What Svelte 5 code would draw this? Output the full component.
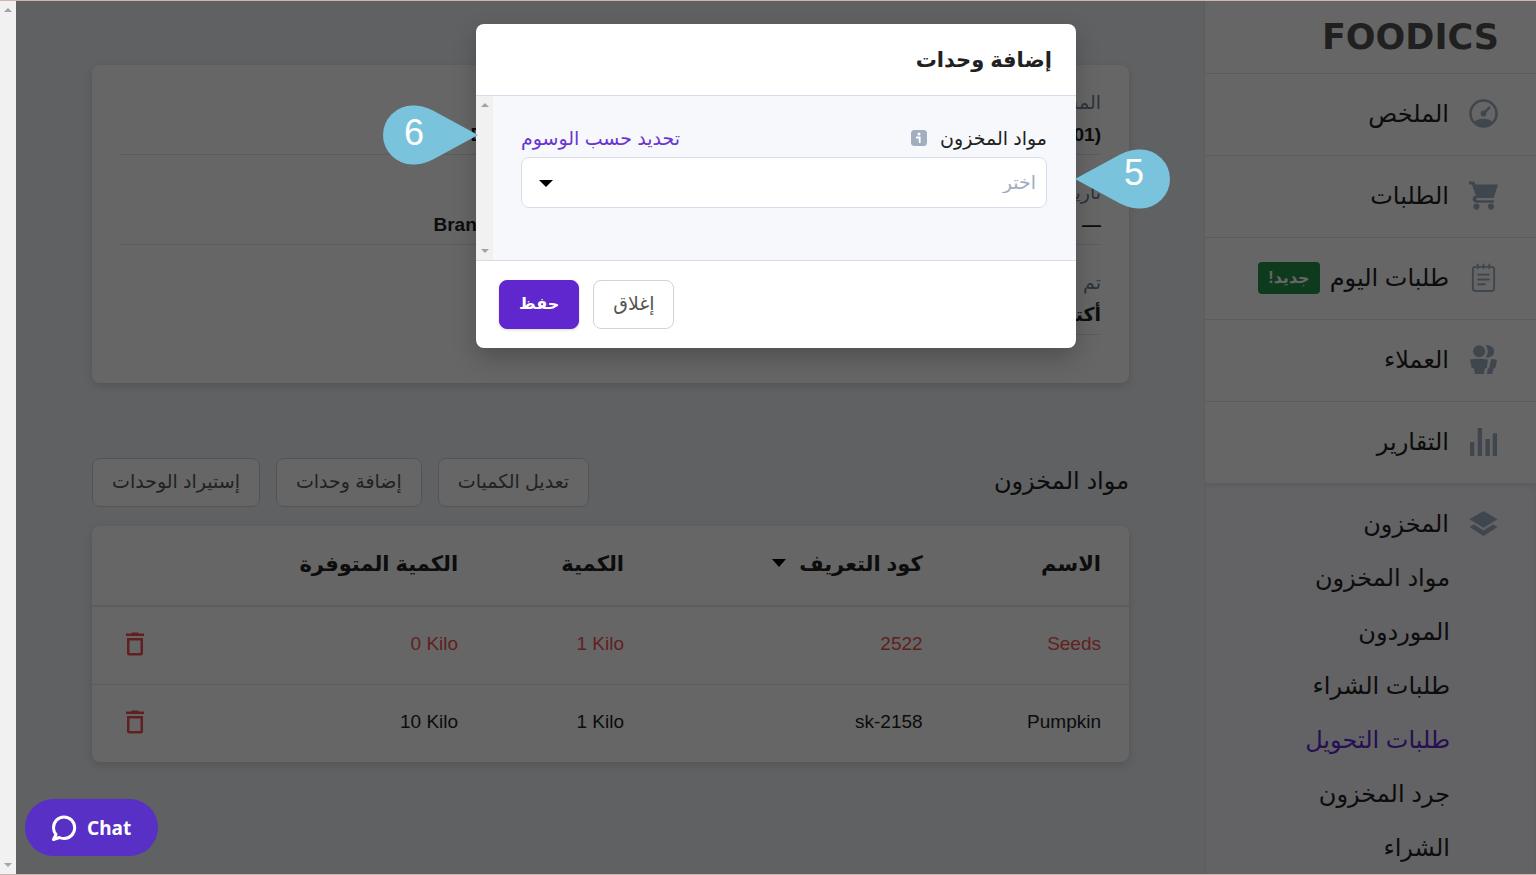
<script lang="ts">
  type Row = { name: string; sku: string; qty: string; available: string; short?: boolean };

  const nav = [
    { label: "الملخص", icon: "gauge" },
    { label: "الطلبات", icon: "cart" },
    { label: "طلبات اليوم", icon: "note", badge: "جديد!" },
    { label: "العملاء", icon: "people" },
    { label: "التقارير", icon: "bars" },
  ];

  const inventory = [
    "مواد المخزون",
    "الموردون",
    "طلبات الشراء",
    "طلبات التحويل",
    "جرد المخزون",
    "الشراء",
  ];
  const current = "طلبات التحويل";

  const details = [
    { label: "المستودع", value: "(B01)" },
    { label: "", value: "Draft" },
    { label: "تاريخ", value: "—" },
    { label: "", value: "Branch 1" },
    { label: "تم", value: "أكتوبر" },
  ];

  const actions = ["تعديل الكميات", "إضافة وحدات", "إستيراد الوحدات"];

  const rows: Row[] = [
    { name: "Seeds", sku: "2522", qty: "1 Kilo", available: "0 Kilo", short: true },
    { name: "Pumpkin", sku: "sk-2158", qty: "1 Kilo", available: "10 Kilo" },
  ];

  let item = $state("");
</script>

{#snippet icon(name: string)}
  <svg class="icon" viewBox="0 0 30 30" aria-hidden="true">
    {#if name === "gauge"}
      <circle cx="15" cy="15" r="13.500" fill="none" stroke="currentColor" stroke-width="2.600" />
      <path d="M5.500 24c2.500-2.800 5.500-3.500 9.500-3.500s7 .7 9.500 3.500c-2.200 3-5.500 4.700-9.500 4.700S7.700 27 5.500 24z" fill="currentColor" />
      <circle cx="15" cy="15" r="3" fill="currentColor" />
      <path d="M15.500 14.500l5.500-5.500" stroke="currentColor" stroke-width="2.600" stroke-linecap="round" />
    {:else if name === "cart"}
      <path
        d="M0 .5h5.300l1.400 3H30l-4.500 14H9.500c-1.300 0-2 .3-2 1.200s.8 1.300 2 1.300h16.200v2.500H8.500C5.600 22.500 3.700 21 3.700 18.700c0-1.700 1-2.800 2.600-3.500L7 15 3 3.500H0z"
        fill="currentColor"
      />
      <circle cx="7.700" cy="26.500" r="3.200" fill="currentColor" />
      <circle cx="22.700" cy="26.500" r="3.200" fill="currentColor" />
    {:else if name === "note"}
      <g fill="none" stroke="currentColor" stroke-width="2" stroke-linecap="round">
        <rect x="4" y="4" width="22" height="25" rx="2.500" />
        <path d="M9 1.500v4M15 1.500v4M21 1.500v4M9.500 12h11M9.500 17h11M9.500 22h7" />
      </g>
    {:else if name === "people"}
      <g fill="currentColor">
        <circle cx="10.500" cy="6.500" r="6.200" />
        <path d="M17 .5c5-.8 9 2 9 6.200s-4 7-9 6c3.200-3.600 3.200-8.600 0-12.200z" />
        <path d="M1 15c5.500-1.200 13-1.200 18.500 0l-1 8.500-2.300 1-.7 5.500H6.200L5.200 24.500l-2.500-1z" />
        <path d="M23 14.500c2 0 4 .2 6 .8l-1.500 8-2 1-1.500 5.700h-5.500l1-5.500 1.500-1z" />
      </g>
    {:else if name === "bars"}
      <path d="M1 15.500h4.500V30H1zM9 1h4.500v29H9zM17 12.500h4.500V30H17zM24.500 6.500H29V30h-4.500z" fill="currentColor" />
    {:else}
      <path d="M15 2L.5 10.700 15 19.500l14.500-8.800zM.5 18.500L15 28l14.500-9.500-4.800-2.500L15 22.200 5.300 16z" fill="currentColor" />
    {/if}
  </svg>
{/snippet}

<div class="shell" dir="rtl" lang="ar">
  <div class="page">
    <aside class="sidebar">
      <a class="logo" href="#home" dir="ltr">FOODICS</a>
      <nav>
        {#each nav as n}
          <a class="nav-item" href="#{n.icon}">
            {@render icon(n.icon)}
            <span>{n.label}</span>
            {#if n.badge}<span class="badge">{n.badge}</span>{/if}
          </a>
        {/each}
        <div class="group">
          <a class="nav-item head" href="#inventory">
            {@render icon("layers")}
            <span>المخزون</span>
          </a>
          {#each inventory as label}
            <a class="sub" class:active={label === current} href="#inventory">{label}</a>
          {/each}
        </div>
      </nav>
    </aside>

    <main>
      <dl class="card details">
        {#each details as d}
          <div class="detail">
            <dt>{d.label}</dt>
            <dd><bdi>{d.value}</bdi></dd>
          </div>
        {/each}
      </dl>

      <div class="section-head">
        <h2>مواد المخزون</h2>
        <div class="actions">
          {#each actions as a}
            <button type="button" class="btn">{a}</button>
          {/each}
        </div>
      </div>

      <div class="card">
        <table>
          <colgroup>
            <col class="c-name" /><col class="c-sku" /><col class="c-qty" /><col class="c-av" /><col />
          </colgroup>
          <thead>
            <tr>
              <th>الاسم</th>
              <th>
                كود التعريف
                <svg class="sort" viewBox="0 0 14 8" aria-hidden="true"><path d="M0 0h14L7 8z" /></svg>
              </th>
              <th>الكمية</th>
              <th>الكمية المتوفرة</th>
              <td></td>
            </tr>
          </thead>
          <tbody>
            {#each rows as r}
              <tr class:short={r.short}>
                <td><bdi>{r.name}</bdi></td>
                <td><bdi>{r.sku}</bdi></td>
                <td><bdi dir="ltr">{r.qty}</bdi></td>
                <td><bdi dir="ltr">{r.available}</bdi></td>
                <td class="del">
                  <button type="button" class="trash" aria-label="حذف">
                    <svg viewBox="0 0 18 24" aria-hidden="true">
                      <path d="M0 1.500h5L6 .5h6l1 1h5V4H0zM1 6h16v15.500a2 2 0 0 1-2 2H3a2 2 0 0 1-2-2zM3.500 8.500V21h11V8.500z" fill-rule="evenodd" />
                    </svg>
                  </button>
                </td>
              </tr>
            {/each}
          </tbody>
        </table>
      </div>
    </main>
  </div>

  <div class="scrollbar">
    <svg viewBox="0 0 8 4" aria-hidden="true"><path d="M4 0l4 4H0z" /></svg>
    <svg viewBox="0 0 8 4" aria-hidden="true"><path d="M0 0h8L4 4z" /></svg>
  </div>

  <div class="overlay">
    <div class="modal-wrap">
      <div class="modal" role="dialog" aria-modal="true" aria-labelledby="dlg-title">
        <header>
          <h3 id="dlg-title">إضافة وحدات</h3>
        </header>
        <div class="body">
          <div class="fields">
            <div class="label-row">
              <label for="items">مواد المخزون</label>
              <svg class="info" viewBox="0 0 16 16" aria-hidden="true">
                <rect width="16" height="16" rx="3.500" fill="#a0aec0" />
                <circle cx="8" cy="4" r="1.500" fill="#fff" />
                <path d="M5 7.500h3.700V13" fill="none" stroke="#fff" stroke-width="1.800" />
              </svg>
              <a class="by-tag" href="#tags">تحديد حسب الوسوم</a>
            </div>
            <div class="select">
              <select id="items" bind:value={item}>
                <option value="">اختر</option>
              </select>
              <svg viewBox="0 0 14 7" aria-hidden="true"><path d="M0 0h14L7 7z" /></svg>
            </div>
          </div>
          <div class="scrollbar inner">
            <svg viewBox="0 0 8 4" aria-hidden="true"><path d="M4 0l4 4H0z" /></svg>
            <svg viewBox="0 0 8 4" aria-hidden="true"><path d="M0 0h8L4 4z" /></svg>
          </div>
        </div>
        <footer>
          <button type="button" class="btn">إغلاق</button>
          <button type="button" class="btn primary">حفظ</button>
        </footer>
      </div>

      <div class="pin five">
        <svg viewBox="0 0 95 60" aria-hidden="true">
          <path d="M0 30L45 5.500C53 1.500 59 .5 65.500 .5a29.500 29.500 0 0 1 0 59C59 59.500 53 58.500 45 54.500z" />
        </svg>
        <span>5</span>
      </div>
      <div class="pin six">
        <svg viewBox="0 0 95 60" aria-hidden="true">
          <path d="M95 30L50 5.500C42 1.500 36 .5 29.500 .5a29.500 29.500 0 0 0 0 59C36 59.500 42 58.500 50 54.500z" />
        </svg>
        <span>6</span>
      </div>
    </div>
  </div>

  <button type="button" class="chat" dir="ltr">
    <svg viewBox="0 0 26 26" aria-hidden="true">
      <path d="M5 19.500C3.300 17.600 2.500 15.400 2.500 12.800 2.500 6.800 7 2 13 2s10.700 4.800 10.700 10.800S19 23.500 13 23.500c-1.700 0-3.200-.3-4.600-1L2.500 24.500z" />
    </svg>
    Chat
  </button>
</div>

<style>
  :global(body) {
    margin: 0;
  }

  .shell {
    --line: #d9dbe9;
    --line-soft: #e4e6ee;
    position: relative;
    display: flex;
    box-sizing: border-box;
    height: 100vh;
    overflow: hidden;
    border-top: 1px solid #c9b7b0;
    border-bottom: 1px solid #c9b7b0;
    font-family: "Liberation Sans", "DejaVu Sans", sans-serif;
    font-size: 19px;
    color: #212121;
  }

  .shell a {
    color: inherit;
    text-decoration: none;
  }

  .page {
    flex: 1;
    display: flex;
    min-width: 0;
    background: #f0f2f7;
  }

  .sidebar {
    flex: 0 0 332px;
    box-sizing: border-box;
    background: #fff;
    border-left: 1px solid var(--line-soft);
  }

  .logo {
    display: flex;
    align-items: center;
    justify-content: flex-end;
    height: 72px;
    padding: 0 37px;
    border-bottom: 1px solid var(--line-soft);
    font: bold 35px "DejaVu Sans", sans-serif;
  }

  .shell .logo {
    color: #505050;
  }

  .nav-item {
    display: flex;
    align-items: center;
    box-sizing: border-box;
    height: 82px;
    padding: 0 38px 2px;
    border-bottom: 1px solid var(--line-soft);
    font-size: 24px;
  }

  .icon {
    width: 29px;
    height: 29px;
    margin-left: 20px;
    color: #a0aec0;
  }

  .badge {
    margin-right: 10px;
    padding: 0 10px;
    border-radius: 4px;
    background: #25914a;
    color: #fff;
    font-size: 16px;
    font-weight: bold;
    line-height: 32px;
  }

  .group {
    height: 100vh;
    background: #f7f8fc;
    box-shadow: inset 0 3px 5px rgba(0, 0, 0, 0.06);
  }

  .head {
    height: 67px;
    padding-top: 14px;
    border: 0;
  }

  .sub {
    display: block;
    padding: 0 86px;
    font-size: 24px;
    line-height: 54px;
  }

  .shell .sub.active {
    color: #5f27cd;
  }

  main {
    flex: 1;
    min-width: 0;
    padding: 64px 75px 0 76px;
  }

  .card {
    margin: 0;
    border-radius: 8px;
    background: #fff;
    box-shadow: 0 3px 8px rgba(0, 0, 0, 0.14);
  }

  .details {
    display: grid;
    grid-template-columns: 17fr 12fr;
    column-gap: 27px;
    padding: 0 28px 48px;
  }

  .detail {
    display: flex;
    flex-direction: column;
    justify-content: flex-end;
    box-sizing: border-box;
    height: 90px;
    padding-bottom: 3px;
    border-bottom: 1px solid var(--line-soft);
    line-height: 32px;
  }

  .detail dt {
    min-height: 32px;
    color: #718096;
  }

  .detail dd {
    margin: 0;
    font-weight: bold;
  }

  .section-head {
    display: flex;
    align-items: center;
    justify-content: space-between;
    margin: 75px 0 19px;
  }

  h2 {
    margin: 0;
    padding-bottom: 4px;
    font-size: 24px;
    font-weight: normal;
  }

  .actions {
    display: flex;
    gap: 16px;
  }

  .btn {
    box-sizing: border-box;
    height: 49px;
    padding: 0 19px 2px;
    border: 1px solid #cbd5e0;
    border-radius: 8px;
    background: #fff;
    color: #555;
    font: inherit;
    cursor: pointer;
  }

  .btn.primary {
    border-color: #5f27cd;
    background: #5f27cd;
    color: #fff;
    font-size: 16px;
    font-weight: bold;
    box-shadow: 0 1px 3px rgba(0, 0, 0, 0.16);
  }

  table {
    width: 100%;
    table-layout: fixed;
    border-collapse: collapse;
  }

  .c-name {
    width: 17.2%;
  }

  .c-sku {
    width: 28.8%;
  }

  .c-qty {
    width: 16%;
  }

  .c-av {
    width: 23%;
  }

  th,
  td {
    box-sizing: border-box;
    height: 78px;
    padding: 0 28px 3px;
    text-align: right;
    white-space: nowrap;
  }

  thead tr {
    border-bottom: 2px solid var(--line-soft);
  }

  tbody tr + tr {
    border-top: 1px solid var(--line-soft);
  }

  th {
    height: 80px;
    font-size: 21px;
  }

  .sort {
    width: 14px;
    height: 8px;
    margin-right: 7px;
    vertical-align: 4px;
  }

  .short {
    color: #f05252;
  }

  .del {
    text-align: left;
  }

  .trash {
    padding: 0 6px;
    border: 0;
    background: none;
    vertical-align: middle;
    cursor: pointer;
  }

  .trash svg {
    display: block;
    width: 18px;
    height: 24px;
    fill: #f05252;
  }

  .scrollbar {
    flex: 0 0 16px;
    display: flex;
    flex-direction: column;
    align-items: center;
    justify-content: space-between;
    box-sizing: border-box;
    padding: 7px 0;
    background: #f1f1f1;
  }

  .scrollbar svg {
    width: 8px;
    height: 4px;
    fill: #a3a3a3;
  }

  .scrollbar.inner {
    flex-basis: 17px;
  }

  .overlay {
    position: absolute;
    inset: 0 0 0 16px;
    padding: 23px 16px;
    background: rgba(0, 0, 0, 0.6);
  }

  .modal-wrap {
    position: relative;
    width: min(600px, 100%);
    margin: 0 auto;
  }

  .modal {
    overflow: hidden;
    border-radius: 8px;
    background: #fff;
    box-shadow: 0 10px 24px rgba(0, 0, 0, 0.22);
  }

  .modal header {
    padding: 0 24px;
    border-bottom: 1px solid var(--line);
    line-height: 71px;
  }

  h3 {
    margin: 0;
    font-size: 21px;
  }

  .body {
    display: flex;
    height: 164px;
    background: #f7f8fc;
  }

  .fields {
    flex: 1;
    padding: 25px 29px 0 28px;
  }

  .label-row {
    display: flex;
    align-items: center;
    height: 34px;
    margin-bottom: 2px;
  }

  .info {
    width: 16px;
    height: 16px;
    margin-right: 13px;
  }

  .shell .by-tag {
    margin-right: auto;
    color: #6a35d0;
  }

  .select {
    position: relative;
  }

  .select select {
    appearance: none;
    box-sizing: border-box;
    width: 100%;
    height: 51px;
    padding: 0 10px;
    border: 1px solid var(--line);
    border-radius: 8px;
    background: #fff;
    color: #a0aec0;
    font: inherit;
  }

  .select svg {
    position: absolute;
    top: 23px;
    left: 18px;
    width: 14px;
    height: 7px;
    pointer-events: none;
  }

  .modal footer {
    display: flex;
    justify-content: flex-end;
    gap: 14px;
    padding: 19px 23px;
    border-top: 1px solid var(--line);
  }

  .pin {
    position: absolute;
    width: 95px;
    height: 60px;
  }

  .pin svg {
    display: block;
    fill: #79c3dc;
  }

  .pin span {
    position: absolute;
    top: 7px;
    color: #fff;
    font-size: 36px;
    line-height: 42px;
  }

  .five {
    top: 125px;
    right: -94px;
  }

  .five span {
    top: 3px;
    left: 49px;
  }

  .six {
    top: 81px;
    left: -93px;
  }

  .six span {
    left: 21px;
  }

  .chat {
    position: absolute;
    bottom: 18px;
    left: 25px;
    display: flex;
    align-items: center;
    gap: 10px;
    height: 57px;
    padding: 0 27px 0 26px;
    border: 0;
    border-radius: 29px;
    background: #5930c5;
    color: #fff;
    font: bold 19px "Noto Sans", sans-serif;
    cursor: pointer;
  }

  .chat svg {
    width: 26px;
    height: 26px;
    fill: none;
    stroke: #fff;
    stroke-width: 3;
    stroke-linejoin: round;
  }
</style>
